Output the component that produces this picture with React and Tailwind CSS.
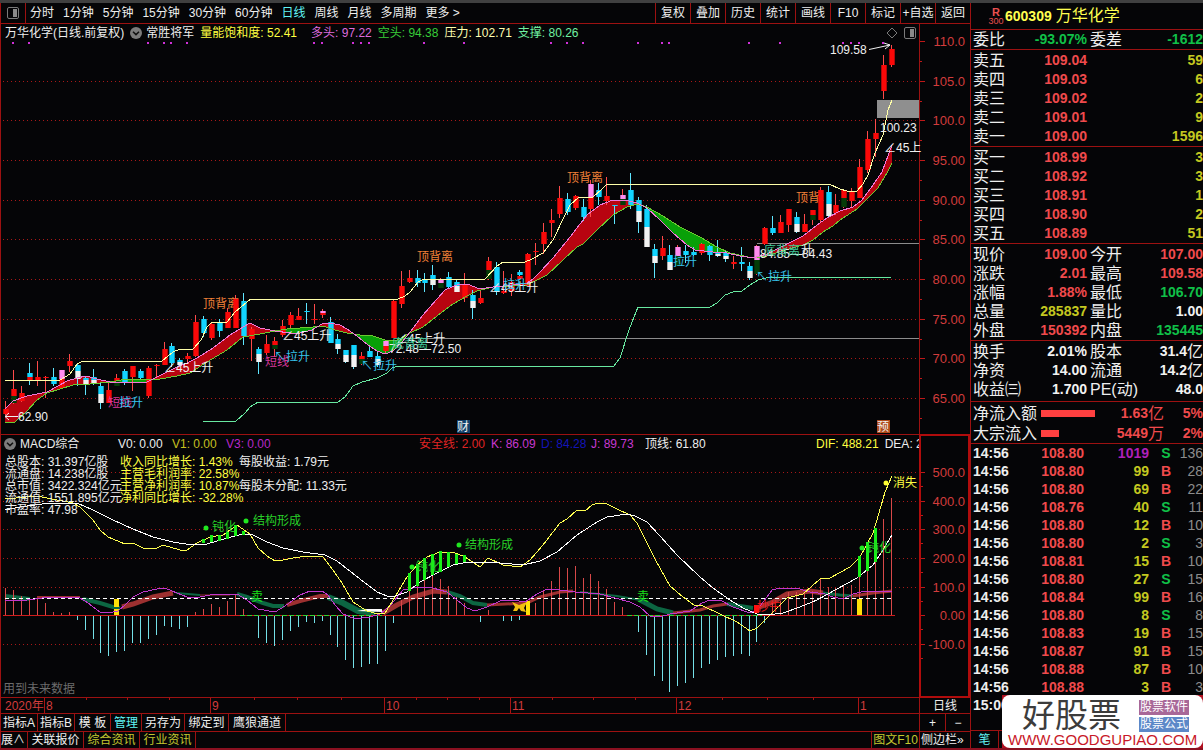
import React from "react";

const RED = "#9c1111";

const periods = ["分时", "1分钟", "5分钟", "15分钟", "30分钟", "60分钟", "日线", "周线", "月线", "多周期", "更多 >"];
const tools = ["复权", "叠加", "历史", "统计", "画线", "F10", "标记", "+自选", "返回"];

/* x, high, low, then body parts [top, bottom, colour] */
const candles = [
  [5, 401, 415, [409, 414, "r"]],
  [13, 370, 404, [389, 396, "r"], [396, 403, "g"]],
  [21, 386, 402, [393, 401, "r"]],
  [29, 363, 385, [373, 377, "c"], [377, 381, "r"]],
  [37, 361, 386, [377, 381, "r"]],
  [45, 376, 398, [377, 378, "r"]],
  [53, 368, 386, [377, 384, "c"]],
  [61, 370, 388, [370, 379, "p"], [379, 388, "r"]],
  [69, 354, 372, [361, 366, "r"]],
  [77, 363, 386, [365, 371, "c"], [371, 379, "w"]],
  [85, 376, 395, [378, 380, "c"], [380, 384, "w"]],
  [93, 369, 385, [377, 380, "c"], [380, 384, "w"]],
  [100, 382, 409, [386, 394, "c"], [394, 403, "w"]],
  [108, 381, 403, [390, 403, "r"]],
  [116, 374, 386, [378, 381, "r"], [381, 386, "g"]],
  [124, 369, 385, [371, 382, "c"]],
  [132, 366, 391, [366, 377, "r"]],
  [140, 369, 379, [371, 378, "c"]],
  [148, 366, 398, [368, 396, "r"]],
  [156, 364, 377, [365, 366, "r"]],
  [164, 342, 365, [349, 365, "r"]],
  [171, 343, 367, [346, 363, "c"]],
  [179, 358, 367, [360, 362, "c"], [362, 365, "w"]],
  [187, 353, 364, [356, 359, "r"]],
  [195, 315, 357, [322, 356, "r"]],
  [203, 316, 337, [319, 333, "c"]],
  [211, 322, 340, [324, 338, "r"]],
  [219, 319, 337, [322, 331, "c"]],
  [227, 308, 328, [312, 328, "r"]],
  [235, 295, 328, [299, 328, "r"]],
  [243, 293, 345, [301, 336, "c"]],
  [251, 327, 361, [329, 339, "r"]],
  [258, 347, 374, [349, 354, "c"], [354, 362, "w"]],
  [266, 335, 355, [344, 353, "r"]],
  [274, 337, 357, [341, 345, "r"], [345, 349, "g"]],
  [282, 320, 337, [326, 335, "r"]],
  [290, 312, 328, [315, 325, "r"]],
  [298, 308, 320, [316, 320, "r"]],
  [306, 303, 324, [311, 312, "c"]],
  [314, 304, 324, [319, 320, "r"]],
  [322, 309, 318, [311, 313, "p"], [313, 315, "r"]],
  [330, 317, 343, [322, 343, "c"]],
  [337, 334, 354, [339, 344, "c"], [344, 349, "w"]],
  [345, 350, 363, [350, 355, "c"], [355, 362, "w"]],
  [353, 345, 369, [345, 355, "c"], [355, 367, "w"]],
  [361, 352, 365, [356, 359, "r"], [359, 364, "g"]],
  [369, 345, 357, [351, 357, "c"]],
  [377, 352, 367, [356, 359, "c"], [359, 365, "w"]],
  [385, 340, 353, [341, 346, "p"], [346, 351, "r"]],
  [393, 299, 338, [301, 338, "r"]],
  [401, 271, 308, [286, 304, "r"]],
  [409, 270, 283, [278, 282, "r"]],
  [417, 270, 287, [278, 283, "c"]],
  [424, 273, 292, [280, 283, "c"]],
  [432, 265, 290, [275, 280, "c"], [280, 285, "w"]],
  [440, 278, 288, [280, 283, "p"], [283, 288, "g"]],
  [448, 272, 289, [277, 287, "c"]],
  [456, 280, 292, [282, 286, "c"], [286, 292, "w"]],
  [464, 273, 302, [285, 298, "r"]],
  [472, 290, 319, [295, 301, "c"], [301, 308, "w"]],
  [480, 291, 304, [298, 303, "r"]],
  [488, 257, 280, [261, 270, "r"], [270, 279, "g"]],
  [496, 262, 295, [267, 292, "c"]],
  [503, 271, 294, [291, 293, "r"]],
  [511, 274, 296, [282, 291, "r"]],
  [519, 270, 280, [272, 275, "c"], [276, 279, "r"]],
  [527, 253, 286, [254, 286, "r"]],
  [535, 243, 265, [251, 252, "r"]],
  [543, 223, 254, [232, 244, "r"]],
  [551, 209, 237, [220, 223, "r"]],
  [559, 186, 218, [198, 214, "r"]],
  [567, 193, 215, [199, 212, "c"]],
  [575, 195, 210, [196, 208, "r"]],
  [583, 199, 221, [207, 217, "c"]],
  [590, 180, 217, [184, 197, "p"], [197, 209, "r"]],
  [598, 183, 205, [190, 197, "c"]],
  [606, 177, 205, [196, 201, "r"]],
  [614, 205, 224, [205, 206, "c"]],
  [622, 189, 205, [195, 199, "p"], [199, 205, "g"]],
  [630, 173, 209, [190, 205, "c"]],
  [638, 197, 233, [200, 211, "c"], [211, 222, "w"]],
  [646, 205, 247, [209, 227, "c"], [227, 247, "w"]],
  [654, 244, 278, [249, 256, "c"], [256, 263, "w"]],
  [662, 236, 260, [248, 256, "r"]],
  [669, 245, 270, [255, 262, "c"], [262, 270, "w"]],
  [677, 245, 265, [247, 256, "p"], [256, 266, "g"]],
  [685, 245, 263, [251, 255, "c"]],
  [693, 247, 256, [252, 255, "c"]],
  [701, 243, 255, [244, 253, "r"]],
  [709, 245, 261, [246, 255, "c"]],
  [717, 240, 257, [252, 254, "c"], [254, 256, "w"]],
  [725, 251, 262, [253, 256, "c"], [256, 259, "w"]],
  [733, 256, 269, [262, 264, "r"]],
  [741, 247, 271, [262, 264, "c"]],
  [749, 262, 280, [266, 271, "c"], [271, 278, "w"]],
  [756, 245, 275, [246, 260, "p"], [260, 274, "g"]],
  [764, 227, 245, [228, 244, "r"]],
  [772, 216, 235, [228, 233, "c"]],
  [780, 215, 233, [222, 233, "r"]],
  [788, 209, 232, [209, 225, "r"]],
  [796, 212, 233, [217, 224, "c"], [224, 232, "w"]],
  [804, 214, 232, [224, 232, "r"]],
  [812, 210, 225, [210, 215, "r"], [215, 220, "g"]],
  [820, 187, 222, [190, 220, "r"]],
  [828, 186, 217, [192, 204, "c"], [204, 216, "w"]],
  [835, 194, 215, [205, 213, "r"]],
  [843, 189, 208, [190, 198, "r"], [198, 207, "g"]],
  [851, 188, 207, [191, 201, "r"]],
  [859, 159, 198, [167, 198, "r"]],
  [867, 131, 173, [139, 170, "r"]],
  [875, 119, 157, [133, 139, "r"]],
  [883, 55, 99, [65, 91, "r"]],
  [891, 45, 67, [49, 65, "r"]],
];
const tone = { r: "#fa0808", c: "#12d4ff", w: "#f2f2f2", p: "#ff8cf0", g: "#043c08" };
const wickTone = { r: "#ff4a4a", c: "#5fe6ff", p: "#ff4a4a" };

const fast = [[5, 409], [13, 401], [27, 396], [47, 392], [58, 386], [67, 381], [77, 378], [86, 376], [97, 379], [110, 382], [127, 383], [147, 382], [157, 377], [167, 372], [177, 367], [187, 363], [197, 358], [213, 348], [230, 335], [240, 329], [250, 323], [260, 328], [275, 331], [290, 333], [300, 333], [312, 330], [322, 324], [330, 323], [340, 325], [347, 329], [357, 336], [368, 345], [377, 351], [385, 354], [393, 351], [402, 342], [410, 332], [423, 315], [437, 299], [445, 290], [457, 285], [467, 284], [480, 289], [493, 287], [513, 285], [527, 283], [533, 279], [540, 272], [553, 258], [570, 237], [587, 215], [600, 205], [613, 200], [625, 200], [637, 203], [647, 208], [660, 220], [673, 233], [687, 245], [695, 250], [713, 252], [727, 253], [740, 256], [753, 258], [767, 254], [785, 245], [803, 236], [817, 225], [827, 218], [840, 211], [853, 207], [862, 200], [873, 185], [882, 172], [892, 145]];
const slow = [[5, 422], [15, 422], [27, 411], [37, 400], [47, 393], [60, 389], [73, 385], [90, 384], [110, 382], [127, 379], [147, 379], [160, 379], [177, 376], [190, 373], [207, 362], [227, 350], [243, 337], [260, 334], [275, 331], [287, 329], [300, 328], [313, 327], [323, 326], [335, 330], [347, 333], [360, 335], [373, 336], [385, 340], [397, 340], [410, 333], [423, 327], [437, 316], [453, 304], [467, 296], [477, 291], [493, 287], [513, 286], [527, 285], [535, 281], [547, 275], [563, 260], [577, 247], [583, 244], [597, 230], [613, 215], [627, 207], [637, 204], [647, 207], [663, 216], [680, 227], [700, 237], [717, 247], [730, 253], [753, 258], [767, 256], [785, 250], [803, 245], [813, 240], [823, 232], [833, 226], [840, 220], [857, 209], [868, 198], [878, 188], [887, 173], [892, 163]];
const pressure = [[5, 380], [60, 380], [70, 374], [77, 364], [83, 361], [162, 361], [173, 352], [180, 349], [193, 349], [201, 340], [207, 327], [212, 322], [227, 322], [235, 312], [247, 302], [251, 299], [398, 299], [405, 296], [410, 292], [418, 282], [424, 279], [485, 279], [497, 266], [503, 262], [525, 262], [532, 259], [543, 253], [553, 240], [565, 215], [570, 205], [578, 198], [593, 197], [602, 189], [607, 184], [829, 184], [840, 189], [847, 191], [857, 191], [863, 184], [868, 175], [875, 153], [883, 135], [888, 110], [892, 100]];
const support = [[203, 421], [236, 421], [245, 413], [250, 407], [258, 402], [338, 402], [345, 397], [353, 386], [362, 382], [377, 378], [387, 373], [392, 368], [398, 366], [614, 366], [620, 358], [629, 330], [632, 322], [638, 307], [710, 307], [717, 303], [725, 295], [733, 292], [742, 291], [750, 285], [758, 280], [770, 277], [891, 277]];

const dea = [[5, 510], [20, 507], [50, 503], [77, 503], [93, 510], [113, 520], [133, 529], [153, 537], [173, 542], [192, 545], [207, 544], [227, 538], [243, 534], [253, 535], [267, 542], [283, 548], [303, 552], [325, 555], [337, 561], [360, 579], [377, 592], [387, 596], [395, 596], [407, 592], [420, 582], [437, 573], [453, 565], [468, 562], [500, 563], [523, 565], [540, 561], [557, 552], [577, 535], [597, 522], [607, 517], [627, 514], [635, 516], [647, 522], [660, 536], [677, 555], [700, 577], [713, 588], [730, 600], [743, 608], [757, 614], [767, 615], [783, 613], [800, 607], [817, 600], [837, 589], [857, 578], [873, 565], [883, 550], [892, 535]];
const dif = [[5, 499], [37, 496], [52, 499], [73, 503], [80, 507], [93, 520], [100, 530], [108, 537], [125, 544], [133, 543], [143, 548], [157, 548], [163, 545], [180, 550], [187, 550], [197, 543], [210, 537], [223, 535], [237, 525], [250, 534], [258, 548], [267, 556], [275, 561], [283, 560], [293, 558], [307, 556], [323, 557], [333, 570], [342, 583], [353, 602], [367, 611], [378, 614], [385, 613], [395, 597], [407, 577], [417, 565], [427, 557], [440, 552], [453, 552], [465, 557], [480, 567], [488, 558], [503, 565], [520, 567], [530, 560], [543, 545], [560, 523], [567, 519], [577, 510], [585, 511], [592, 505], [598, 503], [607, 504], [617, 509], [630, 515], [637, 523], [655, 559], [670, 586], [683, 597], [694, 605], [703, 606], [720, 614], [737, 622], [750, 631], [757, 628], [773, 612], [787, 598], [803, 594], [820, 579], [830, 578], [850, 567], [860, 557], [873, 533], [877, 520], [885, 492], [892, 476]];
const jLine = [[5, 600], [20, 601], [35, 599], [50, 597], [80, 598], [88, 603], [100, 612], [108, 613], [118, 611], [125, 605], [133, 597], [143, 592], [157, 589], [165, 588], [172, 591], [187, 597], [200, 597], [215, 594], [237, 594], [247, 600], [258, 609], [275, 612], [285, 606], [300, 595], [310, 591], [322, 591], [328, 595], [335, 605], [343, 614], [355, 619], [370, 617], [380, 614], [390, 606], [403, 590], [418, 587], [433, 588], [447, 592], [457, 600], [467, 608], [475, 611], [487, 607], [500, 601], [513, 600], [525, 602], [537, 594], [547, 589], [560, 590], [575, 592], [600, 594], [615, 598], [630, 602], [640, 607], [650, 616], [660, 617], [670, 614], [690, 611], [702, 603], [710, 600], [720, 600], [733, 607], [750, 613], [757, 610], [767, 597], [772, 590], [780, 588], [800, 589], [810, 592], [825, 594], [833, 597], [843, 599], [853, 594], [865, 591], [892, 591]];
/* colour, stroke width, points */
const bands = [
  ["g", 4, [[5, 596], [30, 599]]],
  ["r", 2, [[37, 597], [80, 597]]],
  ["g", 4, [[83, 599], [100, 603], [113, 607], [120, 608]]],
  ["r", 5, [[122, 607], [133, 604], [153, 597], [173, 593]]],
  ["g", 2, [[176, 593], [200, 595]]],
  ["r", 1, [[200, 595], [230, 595]]],
  ["g", 4, [[237, 594], [247, 597], [263, 603], [273, 606], [284, 606]]],
  ["r", 4, [[287, 605], [300, 601], [320, 596], [328, 596]]],
  ["g", 6, [[328, 597], [343, 603], [358, 611], [375, 613]]],
  ["r", 5, [[383, 613], [397, 605], [413, 597], [433, 591], [447, 592]]],
  ["g", 4, [[447, 592], [460, 596], [473, 603], [487, 605]]],
  ["r", 3, [[487, 605], [527, 603], [540, 597], [560, 592], [573, 591]]],
  ["g", 2, [[580, 592], [617, 596], [640, 600]]],
  ["g", 5, [[640, 600], [657, 609], [673, 613]]],
  ["r", 3, [[673, 613], [700, 610], [713, 606], [727, 604]]],
  ["g", 4, [[727, 604], [753, 608]]],
  ["r", 5, [[757, 608], [773, 602], [787, 594], [810, 591], [823, 593]]],
  ["g", 3, [[823, 593], [840, 595], [853, 596]]],
  ["r", 3, [[853, 596], [873, 593], [892, 591]]],
];
const bars = [
  [5, 588], [13, 590], [21, 596], [29, 598], [37, 599], [45, 603], [53, 612], [61, 613], [69, 612], [77, 620], [85, 630], [93, 639], [100, 653], [108, 656], [116, 652], [124, 651], [132, 643], [140, 643], [148, 639], [156, 635], [164, 626], [171, 627], [179, 629], [187, 627], [195, 612], [203, 609], [211, 604], [219, 607], [227, 601], [235, 594], [243, 609], [258, 638], [266, 643], [274, 646], [282, 640], [290, 631], [298, 627], [306, 622], [314, 623], [322, 621], [330, 635], [337, 647], [345, 660], [353, 668], [361, 667], [369, 664], [377, 664], [385, 651], [393, 623], [401, 600], [409, 588], [417, 586], [424, 580], [432, 575], [440, 579], [448, 586], [456, 597], [464, 603], [480, 622], [488, 610], [503, 621], [511, 621], [519, 620], [527, 603], [535, 603], [543, 591], [551, 581], [559, 567], [567, 568], [575, 566], [583, 578], [590, 574], [598, 581], [606, 589], [614, 602], [622, 607], [638, 632], [646, 655], [654, 676], [662, 681], [669, 692], [677, 686], [685, 683], [693, 678], [701, 668], [709, 664], [717, 660], [725, 657], [733, 656], [741, 654], [749, 656], [756, 642], [764, 623], [772, 603], [780, 601], [788, 592], [796, 592], [804, 593], [812, 591], [820, 579], [828, 587], [835, 588], [843, 585], [851, 585], [859, 577], [867, 570], [875, 562], [883, 519], [891, 498],
];
const greenBars = [[203, 539, 543], [211, 535, 542], [219, 535, 541], [227, 532, 539], [235, 525, 536], [243, 531, 535], [409, 573, 591], [417, 564, 586], [424, 558, 580], [432, 554, 575], [440, 551, 572], [448, 552, 567], [456, 554, 564], [464, 555, 562], [859, 556, 577], [867, 542, 571], [875, 528, 562]];
const dots = [13, 29, 148, 164, 171, 187, 314, 322, 353, 361, 369, 424, 464, 551, 567, 583, 638, 662, 669, 749, 780, 843, 851, 859, 883];

const path = (pts) => pts.map((p) => p.join(",")).join(" ");

function valueAt(pts, x) {
  for (let i = 1; i < pts.length; i++) {
    if (x <= pts[i][0]) {
      const [x0, y0] = pts[i - 1];
      const [x1, y1] = pts[i];
      return y0 + ((y1 - y0) * (x - x0)) / (x1 - x0);
    }
  }
  return pts[pts.length - 1][1];
}

/* Areas between the two averages, split wherever they cross. */
function ribbon() {
  const areas = [];
  let current = null;
  for (let x = 5; x <= 892; x++) {
    const f = valueAt(fast, x);
    const s = valueAt(slow, x);
    const up = f <= s;
    if (!current || current.up !== up) {
      if (current) {
        current.top.push([x, f]);
        current.bottom.push([x, s]);
      }
      current = { up, top: [], bottom: [] };
      areas.push(current);
    }
    current.top.push([x, f]);
    current.bottom.push([x, s]);
  }
  return areas;
}

function T({ x, y, c = "#f0f0f0", s = 12, anchor = "start", children }) {
  return (
    <text x={x} y={y + Math.round(s * 0.36)} fill={c} fontSize={s} textAnchor={anchor}>
      {children}
    </text>
  );
}

function PriceChart() {
  const grid = [81, 120, 160, 200, 239, 279, 319, 358, 398];
  const labels = ["110.0", "105.0", "100.0", "95.00", "90.00", "85.00", "80.00", "75.00", "70.00", "65.00"];
  return (
    <svg viewBox="1 42 969 392" className="block h-auto w-full overflow-visible" role="img" aria-label="万华化学 日线">
      {grid.map((y) => (
        <line key={y} x1="3" x2="919" y1={y + 0.5} y2={y + 0.5} stroke="#a81818" strokeDasharray="1 3" />
      ))}
      <line x1="919.5" x2="919.5" y1="42" y2="434" stroke={RED} />
      {labels.map((l, i) => {
        const y = i ? grid[i - 1] : 41;
        return (
          <g key={l}>
            <line x1="920" x2="925" y1={y + 0.5} y2={y + 0.5} stroke="#c01818" />
            <line x1="920" x2="922" y1={y + 20.5} y2={y + 20.5} stroke="#c01818" />
            <T x={965} y={y} s={13} c="#d23c3c" anchor="end">{l}</T>
          </g>
        );
      })}
      {dots.map((x) => (
        <rect key={x} x={x - 1} y="42" width="2" height="2" fill="#d030d8" />
      ))}
      <line x1="400" x2="919" y1="338.5" y2="338.5" stroke="#8c8c8c" />
      <line x1="757" x2="919" y1="243.5" y2="243.5" stroke="#8c8c8c" />
      <rect x="877" y="100" width="42" height="18" fill="#8f8f8f" />
      <T x={203} y={304} c="#f08038">顶背离</T>
      <T x={417} y={257} c="#f08038">顶背离</T>
      <T x={567} y={178} c="#f08038">顶背离</T>
      <T x={796} y={198} c="#f08038">顶背</T>
      {ribbon().map((a, i) => (
        <polygon key={i} points={path([...a.top, ...a.bottom.reverse()])} fill={a.up ? "#b80410" : "#08a008"} />
      ))}
      <polyline points={path(support)} fill="none" stroke="#68e8a0" shapeRendering="crispEdges" />
      <g shapeRendering="crispEdges">
        {candles.map(([x, hi, lo, ...body]) => (
          <g key={x}>
            <line x1={x + 0.5} x2={x + 0.5} y1={hi} y2={lo} stroke={wickTone[body[0][2]]} />
            {body.map(([a, b, c]) => (
              <g key={a} fill={tone[c]}>
                <rect x={x - 2} y={a} width="6" height={b - a} fillOpacity="0.7" />
                <rect x={x - 1} y={a} width="4" height={b - a} />
              </g>
            ))}
          </g>
        ))}
      </g>
      <g fill="none" shapeRendering="crispEdges">
        <polyline points={path(slow)} stroke="#6cc830" />
        <polyline points={path(fast)} stroke="#f078d8" />
        <polyline points={path(pressure)} stroke="#ffffa8" />
      </g>
      <T x={164} y={368}>∠45上升</T>
      <T x={282} y={336}>∠45上升</T>
      <T x={396} y={339}>∠45上升</T>
      <T x={489} y={288}>∠45上升</T>
      <T x={801} y={250}>升</T>
      <T x={884} y={148}>∠45上</T>
      <T x={108} y={403} c="#d8389c">短线</T>
      <T x={265} y={362} c="#d8389c">短线</T>
      <T x={119} y={403} c="#38c4ec">拉升</T>
      <T x={274} y={357} c="#38c4ec">↖拉升</T>
      <T x={361} y={366} c="#38c4ec">↖拉升</T>
      <T x={503} y={285} c="#38c4ec">拉升</T>
      <T x={673} y={262} c="#38c4ec">拉升</T>
      <T x={756} y={277} c="#38c4ec">↖拉升</T>
      <T x={389} y={349}>72.48—72.50</T>
      <T x={760} y={254}>84.85—84.43</T>
      <T x={392} y={344} c="#40c898">底背离</T>
      <T x={764} y={251} c="#40c898">底背离</T>
      <T x={18} y={417}>62.90</T>
      <path d="M18 416.500H5M9 413l-4 3.500 4 3.500" fill="none" stroke="#f0f0f0" />
      <T x={830} y={50}>109.58</T>
      <path d="M869 49.500L890 45M884 43l6 2-5 4" fill="none" stroke="#f0f0f0" />
      <T x={880} y={128}>100.23</T>
      <rect x="457" y="420" width="13" height="13" fill="#12406a" />
      <T x={457} y={427}>财</T>
      <rect x="877" y="420" width="13" height="13" fill="#b04c1c" />
      <T x={877} y={427}>预</T>
    </svg>
  );
}

function MacdChart() {
  const rows = [[472, "500.0"], [501, "400.0"], [529, "300.0"], [558, "200.0"], [587, "100.0"], [615, "0.00"], [644, "-100.0"]];
  return (
    <svg viewBox="1 452 969 245" className="block h-auto w-full overflow-visible" role="img" aria-label="MACD综合">
      <rect x="920" y="435" width="49" height="262" fill="none" stroke="#b00c0c" strokeWidth="2" />
      {rows.map(([y, l]) => (
        <g key={l}>
          {l !== "0.00" && <line x1="3" x2="919" y1={y + 0.5} y2={y + 0.5} stroke="#a81818" strokeDasharray="1 3" />}
          <line x1="921" x2="925" y1={y + 0.5} y2={y + 0.5} stroke="#c01818" />
          <line x1="921" x2="923" y1={y + 14.5} y2={y + 14.5} stroke="#c01818" />
          <T x={965} y={y} s={13} c="#d23c3c" anchor="end">{l}</T>
        </g>
      ))}
      {bands.map(([c, width, pts], i) => (
        <polyline key={i} points={path(pts)} fill="none" stroke={c === "g" ? "#0c6642" : "#9c3030"} strokeWidth={width} />
      ))}
      {bars.map(([x, y]) => (
        <line key={x} x1={x + 0.5} x2={x + 0.5} y1="615" y2={y} stroke={y < 615 ? "#d84848" : "#74e0e8"} />
      ))}
      <line x1="3" x2="895" y1="615.5" y2="615.5" stroke="#d01c1c" />
      <path d="M240 615.500H382M627 615.500H762" stroke="#30d030" strokeDasharray="5 2" />
      <path d="M5 598.500H892" stroke="#ffffff" strokeDasharray="4 3" />
      <g fill="#ffe008">
        <rect x="114" y="599" width="5" height="8" />
        <rect x="114" y="609" width="5" height="6" />
        <rect x="526" y="601" width="4" height="14" />
        <rect x="857" y="599" width="5" height="16" />
      </g>
      <path d="M512 602l7 3 8-3-3 6 2 4-5-1-2-3-2 3-4 0 2-4z" fill="#f0c010" />
      <path d="M357 611l10-2h15v3z" fill="#ffffff" />
      <g fill="none" shapeRendering="crispEdges">
        <polyline points={path(jLine)} stroke="#c038cc" />
        <polyline points={path(dif)} stroke="#ffff50" />
        <polyline points={path(dea)} stroke="#ffffff" />
      </g>
      {greenBars.map(([x, a, b]) => (
        <rect key={x} x={x - 1} y={a} width="3" height={b - a} fill="#18f018" />
      ))}
      <g fill="#20e820">
        <circle cx="206" cy="528" r="2.500" />
        <circle cx="246" cy="521" r="2.500" />
        <circle cx="412" cy="567" r="2.500" />
        <circle cx="459" cy="545" r="2.500" />
        <circle cx="862" cy="548" r="2.500" />
        <circle cx="886" cy="483" r="2.500" fill="#ffff30" />
      </g>
      <T x={212} y={527} c="#28d028">钝化</T>
      <T x={253} y={521} c="#28d028">结构形成</T>
      <T x={416} y={567} c="#28d028">钝化</T>
      <T x={465} y={545} c="#28d028">结构形成</T>
      <T x={867} y={548} c="#28d028">钝化</T>
      <T x={251} y={597} c="#18e018">卖</T>
      <T x={637} y={597} c="#18e018">卖</T>
      <T x={893} y={483} c="#ffff40">消失</T>
      <rect x="754" y="605" width="5" height="8" fill="#ff1010" />
      <T x={757} y={607} c="#f01818">抄牛</T>
      <T x={3} y={689} c="#6c6c6c">用到未来数据</T>
    </svg>
  );
}

function DateAxis() {
  const months = [[44, "8"], [210, "9"], [384, "10"], [510, "11"], [676, "12"], [858, "1"]];
  const ticks = [86, 127, 169, 254, 297, 341, 416, 447, 479, 552, 593, 635, 722, 767, 813];
  return (
    <svg viewBox="1 698 918 15" className="block h-auto min-w-0 flex-1" role="img" aria-label="日期">
      <T x={5} y={706} c="#d23c3c">2020年</T>
      {months.map(([x, l]) => (
        <g key={l}>
          <line x1={x + 0.5} x2={x + 0.5} y1="698" y2="713" stroke="#a81414" />
          <T x={x + 2} y={706} c="#d23c3c">{l}</T>
        </g>
      ))}
      {ticks.map((x) => (
        <line key={x} x1={x + 0.5} x2={x + 0.5} y1="698" y2="700" stroke="#a81414" />
      ))}
    </svg>
  );
}

function Chevron() {
  return (
    <svg viewBox="0 0 12 12" className="h-3 w-3 shrink-0">
      <circle cx="6" cy="6" r="6" fill="#7c7c7c" />
      <path d="M3 4.800L6 7.600 9 4.800" fill="none" stroke="#111" strokeWidth="1.500" />
    </svg>
  );
}

function PanelIcon() {
  return (
    <svg viewBox="0 0 12 12" className="h-3 w-3 shrink-0">
      <rect x="0.500" y="0.500" width="11" height="11" rx="1.500" fill="none" stroke="#7a7a7a" />
      <rect x="6" y="2" width="4" height="8" fill="#8a8a8a" />
    </svg>
  );
}

const r = "text-[#f04a4c]";
const g = "text-[#10c048]";
const yl = "text-[#c4c820]";
const w = "text-[#f2f2f2]";

const sells = [["卖五", "109.04", "59"], ["卖四", "109.03", "6"], ["卖三", "109.02", "2"], ["卖二", "109.01", "9"], ["卖一", "109.00", "1596"]];
const buys = [["买一", "108.99", "3"], ["买二", "108.92", "3"], ["买三", "108.91", "1"], ["买四", "108.90", "2"], ["买五", "108.89", "51"]];
const stats = [
  ["现价", "109.00", r, "今开", "107.00", r],
  ["涨跌", "2.01", r, "最高", "109.58", r],
  ["涨幅", "1.88%", r, "最低", "106.70", g],
  ["总量", "285837", yl, "量比", "1.00", w],
  ["外盘", "150392", r, "内盘", "135445", g],
];
const stats2 = [
  ["换手", "2.01%", w, "股本", "31.4亿", w],
  ["净资", "14.00", w, "流通", "14.2亿", w],
  ["收益㈢", "1.700", w, "PE(动)", "48.0", w],
];
const trades = [
  ["108.80", "1019", "S", "136"], ["108.80", "99", "B", "28"], ["108.80", "69", "B", "22"], ["108.76", "40", "S", "11"],
  ["108.80", "12", "B", "10"], ["108.80", "2", "S", "3"], ["108.81", "15", "B", "10"], ["108.80", "27", "S", "15"],
  ["108.84", "99", "B", "16"], ["108.80", "8", "S", "8"], ["108.83", "19", "B", "15"], ["108.87", "91", "B", "15"],
  ["108.88", "87", "B", "10"], ["108.88", "3", "B", "3"],
];

function Label({ children }) {
  return <span className="block h-[19px] text-base leading-[19px] font-normal whitespace-nowrap">{children}</span>;
}

function Num({ children, className }) {
  const unit = /[亿万]$/.test(children) ? children.slice(-1) : "";
  return (
    <span className={`flex h-[19px] items-center justify-end text-sm leading-[19px] font-bold whitespace-nowrap ${className}`}>
      {unit ? children.slice(0, -1) : children}
      {unit && <span className="text-base leading-[19px] font-normal">{unit}</span>}
    </span>
  );
}

function Book({ rows }) {
  return (
    <table className="w-full table-fixed border-collapse">
      <tbody>
        {rows.map(([l, p, q]) => (
          <tr key={l}>
            <th className="w-12 p-0 text-left"><Label>{l}</Label></th>
            <td className="w-[66px] p-0"><Num className={r}>{p}</Num></td>
            <td className="p-0"><Num className={yl}>{q}</Num></td>
          </tr>
        ))}
      </tbody>
    </table>
  );
}

function Stats({ rows }) {
  return (
    <table className="w-full table-fixed border-collapse">
      <tbody>
        {rows.map(([a, av, ac, b, bv, bc]) => (
          <tr key={a}>
            <th className="w-12 p-0 text-left"><Label>{a}</Label></th>
            <td className="w-[66px] p-0"><Num className={ac}>{av}</Num></td>
            <th className="w-[52px] p-0 pl-[3px] text-left"><Label>{b}</Label></th>
            <td className="p-0"><Num className={bc}>{bv}</Num></td>
          </tr>
        ))}
      </tbody>
    </table>
  );
}

function Sidebar() {
  const section = "border-t border-[#9c1111] pl-0.5";
  return (
    <aside className="flex w-[233px] shrink-0 flex-col overflow-hidden border-l border-[#9c1111]">
      <header className="flex h-[26px] items-center gap-0.5 pl-[18px] text-[#ffff50]">
        <div className="flex w-[14px] flex-col items-center leading-none text-[#e85050]">
          <span className="text-[11px] leading-[10px] font-bold">R</span>
          <span className="text-[9px] leading-[9px]">300</span>
        </div>
        <span className="text-sm font-bold">600309</span>
        <h1 className="pl-0.5 text-base leading-5">万华化学</h1>
      </header>
      <div className={section}>
        <Stats rows={[["委比", "-93.07%", g, "委差", "-1612", g]]} />
      </div>
      <div className={`${section} pt-px`}><Book rows={sells} /></div>
      <div className={`${section} pt-px`}><Book rows={buys} /></div>
      <div className={`${section} pt-px`}><Stats rows={stats} /></div>
      <div className={`${section} pt-px pb-0.5`}><Stats rows={stats2} /></div>
      <div className={`${section} pt-px`}>
        {[["净流入额", "w-[54px]", "1.63亿", "5%"], ["大宗流入", "w-[18px]", "5449万", "2%"]].map(([l, bw, v, p]) => (
          <div key={l} className="flex h-5 items-center">
            <span className="w-[68px] shrink-0"><Label>{l}</Label></span>
            <span className="flex flex-1 items-center"><span className={`h-[7px] ${bw} bg-[#ff4040]`} /></span>
            <Num className={r}>{v}</Num>
            <span className="w-[39px]"><Num className={r}>{p}</Num></span>
          </div>
        ))}
      </div>
      <div className={section}>
        <table className="w-full table-fixed border-collapse text-sm leading-[18px] font-bold">
          <tbody>
            {trades.map(([p, v, s, n], i) => (
              <tr key={i} className="h-[18px]">
                <td className="w-12 p-0">14:56</td>
                <td className={`w-[63px] p-0 text-right ${r}`}>{p}</td>
                <td className={`p-0 text-right ${v === "1019" ? "text-[#b020b8]" : yl}`}>{v}</td>
                <td className={`w-[34px] p-0 text-center ${s === "S" ? g : r}`}>{s}</td>
                <td className="w-5 p-0 font-normal text-[#8c8c8c]">
                  <span className="flex justify-end">{n}</span>
                </td>
              </tr>
            ))}
            <tr className="h-[18px]">
              <td className="p-0">15:00</td>
            </tr>
          </tbody>
        </table>
      </div>
      <div className="mt-auto flex h-[18px] border-t border-[#9c1111]">
        <button className="w-7 border-r border-[#9c1111] text-[#60f0f0]">笔</button>
      </div>
    </aside>
  );
}

const indicatorTabs = [["指标A", "w-[37px]"], ["指标B", "w-[37px]"], ["模 板", "w-9"], ["管理", "w-[31px]"], ["另存为", "w-[43px]"], ["绑定到", "w-11"], ["鹰狼通道", "w-[57px]"]];
const facts = [
  ["总股本: 31.397亿股", "收入同比增长: 1.43%", "每股收益: 1.79元"],
  ["流通盘: 14.238亿股", "主营毛利润率: 22.58%", ""],
  ["总市值: 3422.324亿元", "主营净利润率: 10.87%", "每股未分配: 11.33元"],
  ["流通值: 1551.895亿元", "净利同比增长: -32.28%", ""],
  ["市盈率: 47.98", "", ""],
];

export default function App() {
  return (
    <div className="relative flex min-h-screen flex-col overflow-hidden border-t-3 border-b-2 border-t-[#404040] border-b-[#8a1020] bg-[#050507] font-['Liberation_Sans','Noto_Sans_CJK_SC',sans-serif] text-xs leading-4 text-[#eeeeee]">
      <div className="flex flex-1">
        <main className="flex min-w-0 flex-1 flex-col border-l border-[#9c1111]">
          <nav className="flex h-[21px] items-stretch border-b border-[#9c1111] whitespace-nowrap">
            <button aria-label="侧栏" className="flex w-[25px] items-center justify-center border-r border-[#9c1111]"><PanelIcon /></button>
            <div className="flex flex-1 items-center gap-[9px] pl-1">
              {periods.map((p) => (
                <button key={p} className={p === "日线" ? "text-[#60f4f4]" : ""}>{p}</button>
              ))}
            </div>
            {tools.map((t) => (
              <button key={t} className="w-[35px] border-l border-[#9c1111] text-center">{t}</button>
            ))}
          </nav>

          <div className="flex h-[18px] items-stretch whitespace-nowrap">
            <div className="flex flex-1 items-center gap-1.5 pr-[3px] pl-1">
              <span>万华化学(日线.前复权)</span>
              <Chevron />
              <span className="-ml-0.5">常胜将军</span>
              <span className="text-[#ffff40]">量能饱和度: 52.41</span>
              <span className="ml-2 text-[#dc6cdc]">多头: 97.22</span>
              <span className="text-[#38cc38]">空头: 94.38</span>
              <span className="text-[#ffffb0]">压力: 102.71</span>
              <span className="text-[#70f0a0]">支撑: 80.26</span>
              <span className="flex-1" />
              <svg viewBox="0 0 12 12" className="h-3 w-3">
                <path d="M6 1l5 5-5 5-5-5z" fill="none" stroke="#7a7a7a" />
              </svg>
              <PanelIcon />
            </div>
            <div className="w-[51px] border-l border-[#9c1111]" />
          </div>
          <PriceChart />

          <div className="flex h-[18px] items-center border-t border-[#9c1111] whitespace-nowrap">
            <div className="flex min-w-0 flex-1 items-center overflow-hidden pl-[3px]">
              <Chevron />
              <span className="w-[102px] pl-1">MACD综合</span>
              <span className="w-[54px]">V0: 0.00</span>
              <span className="w-[54px] text-[#c8c020]">V1: 0.00</span>
              <span className="w-[193px] text-[#b828c8]">V3: 0.00</span>
              <span className="w-[72px] text-[#e02424]">安全线: 2.00</span>
              <span className="w-[50px] text-[#c838d0]">K: 86.09</span>
              <span className="w-[50px] text-[#1414b8]">D: 84.28</span>
              <span className="w-[54px] text-[#c838d0]">J: 89.73</span>
              <span>顶线: 61.80</span>
              <span className="ml-auto w-[103px] shrink-0 overflow-hidden">
                <span className="pr-1.5 text-[#ffff40]">DIF: 488.21</span>DEA: 2
              </span>
            </div>
            <div className="w-[51px] shrink-0" />
          </div>
          <div className="relative">
            <MacdChart />
            <div className="absolute top-1 left-1 grid grid-cols-[115px_119px_auto] leading-3 whitespace-nowrap">
              {facts.flatMap((row, i) =>
                row.map((f, j) => (
                  <span key={`${i}-${j}`} className={j === 1 ? "text-[#ffff40]" : ""}>{f}</span>
                ))
              )}
            </div>
          </div>

          <div className="flex h-4 items-stretch border-t border-[#9c1111]">
            <DateAxis />
            <div className="w-[51px] border-l border-[#9c1111] text-center">日线</div>
          </div>
          <div className="flex h-[18px] items-stretch border-t border-[#9c1111] whitespace-nowrap">
            {indicatorTabs.map(([t, cls]) => (
              <button key={t} className={`border-r border-[#9c1111] text-center ${cls} ${t === "管理" ? "text-[#60f4f4]" : ""}`}>{t}</button>
            ))}
            <span className="flex-1" />
            <button aria-label="放大" className="w-[26px] border-l border-[#9c1111]">+</button>
            <button aria-label="缩小" className="w-[25px] border-l border-[#9c1111]">−</button>
          </div>
          <div className="flex h-[17px] items-stretch border-t border-[#9c1111] whitespace-nowrap">
            <button className="w-[27px] border-r border-[#9c1111] text-left">展∧</button>
            <button className="w-14 border-r border-[#9c1111] text-center">关联报价</button>
            <button className="w-14 border-r border-[#9c1111] text-center text-[#c4c830]">综合资讯</button>
            <button className="w-14 border-r border-[#9c1111] text-center text-[#c4c830]">行业资讯</button>
            <span className="flex-1" />
            <button className="w-12 border-l border-[#9c1111] text-center text-[#c4c830]">图文F10</button>
            <button className="w-[51px] border-l border-[#9c1111] pl-px text-left">侧边栏»</button>
          </div>
        </main>
        <Sidebar />
      </div>

      <a href="#goodgupiao" className="absolute right-0 bottom-0 flex h-[53px] w-[201px] flex-col bg-[#b01020]">
        <span className="flex h-full w-full flex-col rounded-lg bg-white">
          <span className="flex items-center gap-[18px] pt-1 pl-5">
            <span className="text-[33px] leading-[34px] whitespace-nowrap text-[#3c3c3c]">好股票</span>
            <span className="flex flex-col gap-0.5 leading-[15px] text-white">
              <span className="bg-[#a86898] px-px">股票软件</span>
              <span className="bg-[#5c88c8] px-px">股票公式</span>
            </span>
          </span>
          <span className="pl-1.5 text-[15px] leading-[14px] text-[#c81828]">WWW.GOODGUPIAO.COM</span>
        </span>
      </a>
    </div>
  );
}
